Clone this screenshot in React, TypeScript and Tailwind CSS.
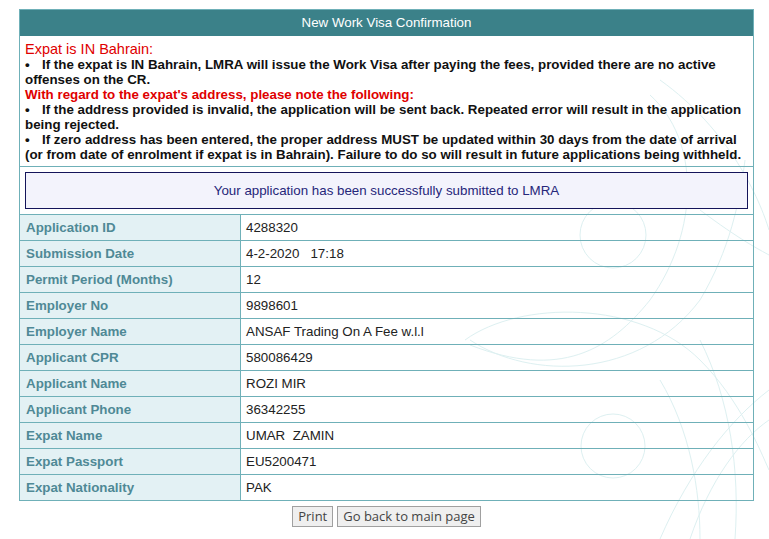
import React from "react";

const rows: [string, string][] = [
  ["Application ID", "4288320"],
  ["Submission Date", "4-2-2020\u00a0\u00a0\u00a017:18"],
  ["Permit Period (Months)", "12"],
  ["Employer No", "9898601"],
  ["Employer Name", "ANSAF Trading On A Fee w.l.l"],
  ["Applicant CPR", "580086429"],
  ["Applicant Name", "ROZI MIR"],
  ["Applicant Phone", "36342255"],
  ["Expat Name", "UMAR\u00a0\u00a0ZAMIN"],
  ["Expat Passport", "EU5200471"],
  ["Expat Nationality", "PAK"],
];

function Decoration() {
  return (
    <svg
      className="absolute left-0 top-0 pointer-events-none"
      width="769"
      height="539"
      viewBox="0 0 769 539"
      fill="none"
      stroke="#ddf0f1"
      strokeWidth="1"
    >
      <circle cx="613" cy="235" r="33" />
      <circle cx="613" cy="446" r="32" />
      <path d="M465 340 C 520 300, 640 300, 700 360 C 740 400, 760 450, 769 470" />
      <path d="M470 340 C 530 380, 640 380, 700 300 C 730 250, 740 200, 745 160" />
      <path d="M650 95 C 700 140, 700 230, 650 300 C 610 350, 560 380, 470 345" />
      <path d="M660 80 C 730 130, 760 200, 769 230" />
      <path d="M700 210 C 740 240, 760 250, 769 255" />
      <path d="M660 539 C 690 470, 730 420, 769 390" />
      <path d="M690 539 C 710 480, 740 440, 769 420" />
      <path d="M700 340 C 730 400, 740 470, 735 539" />
      <path d="M660 380 C 690 430, 700 490, 700 539" />
    </svg>
  );
}

export default function App() {
  return (
    <div
      className="relative w-[769px] h-[539px] bg-white overflow-hidden"
      style={{ fontFamily: '"Liberation Sans", Arial, sans-serif' }}
    >
      <Decoration />
      <div className="relative pt-[9px] pl-[19px]">
        <div className="w-[735px] border border-[#6fb0b8]">
          <div className="h-[26px] bg-[#3b8189] text-white text-[13.33px] flex items-center justify-center">
            New Work Visa Confirmation
          </div>
          <div className="px-[5px] pt-[6px] pb-[4px] text-[13.33px] leading-[15px] border-b border-[#6fb0b8]">
            <div className="text-[#e00000] text-[14.5px]">Expat is IN Bahrain:</div>
            <div className="font-bold text-[#111]">
              <span className="inline-block w-[17px]">•</span>If the expat is IN Bahrain, LMRA will issue the Work Visa after paying the fees, provided there are no active offenses on the CR.
            </div>
            <div className="font-bold text-[#e00000]">With regard to the expat's address, please note the following:</div>
            <div className="font-bold text-[#111]">
              <span className="inline-block w-[17px]">•</span>If the address provided is invalid, the application will be sent back. Repeated error will result in the application being rejected.
            </div>
            <div className="font-bold text-[#111]">
              <span className="inline-block w-[17px]">•</span>If zero address has been entered, the proper address MUST be updated within 30 days from the date of arrival (or from date of enrolment if expat is in Bahrain). Failure to do so will result in future applications being withheld.
            </div>
          </div>
          <div className="p-[5px] border-b border-[#6fb0b8]">
            <div className="h-[37px] border border-[#14145a] bg-[#f3f3fc] flex items-center justify-center text-[13.33px] text-[#26267a]">
              Your application has been successfully submitted to LMRA
            </div>
          </div>
          {rows.map(([label, value], i) => (
            <div
              key={label}
              className={
                i < rows.length - 1
                  ? "flex h-[26px] border-b border-[#6fb0b8] text-[13.33px]"
                  : "flex h-[25px] text-[13.33px]"
              }
            >
              <div className="w-[221px] shrink-0 bg-[#e3f1f4] border-r border-[#6fb0b8] pl-[6px] flex items-center font-bold text-[#4f8996]">
                {label}
              </div>
              <div className="pl-[5px] flex items-center text-[#222]">{value}</div>
            </div>
          ))}
        </div>
        <div
          className="flex justify-center gap-[4px] mt-[5px] w-[735px]"
          style={{ fontFamily: '"Open Sans", "DejaVu Sans", sans-serif' }}
        >
          <button className="h-[21px] px-[5px] border border-[#a0a0a0] bg-[#efefef] text-[13px] text-[#444] leading-none">
            Print
          </button>
          <button className="h-[21px] px-[5px] border border-[#a0a0a0] bg-[#efefef] text-[13px] text-[#444] leading-none">
            Go back to main page
          </button>
        </div>
      </div>
    </div>
  );
}
